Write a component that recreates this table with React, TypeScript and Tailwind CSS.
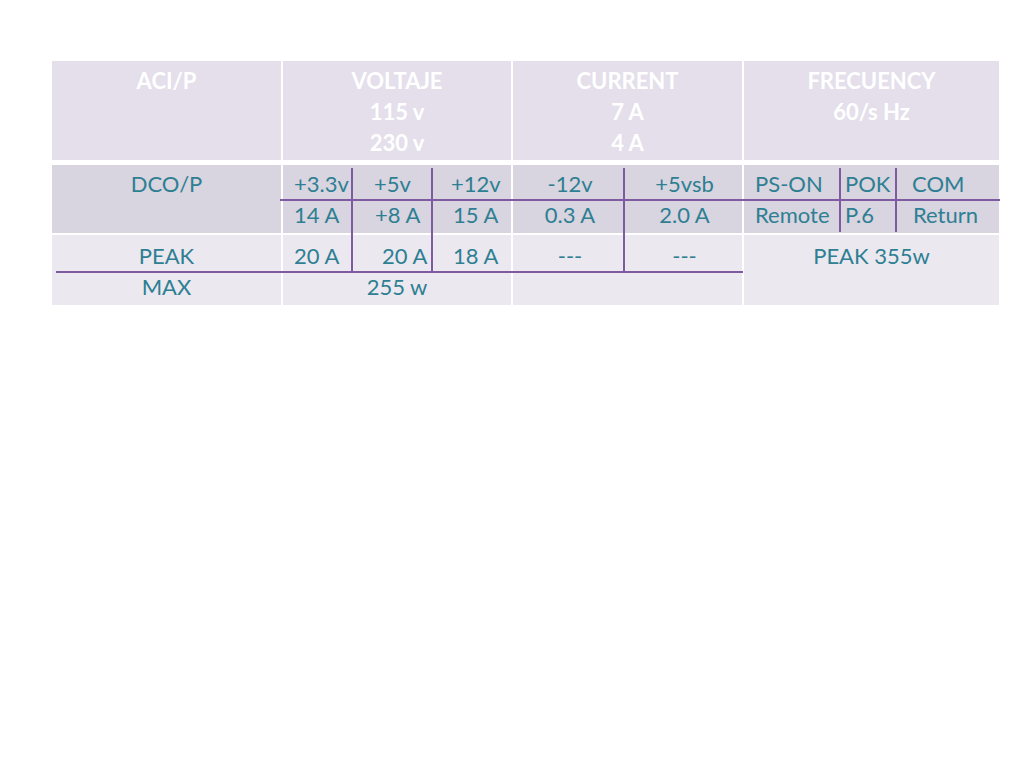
import React from "react";

const font = { fontFamily: "Lato, 'Open Sans', sans-serif" };

const Line = ({ className }: { className: string }) => (
  <div className={`absolute bg-[#7e5aa2] ${className}`} />
);

export default function App() {
  return (
    <div className="w-[1024px] h-[768px] bg-white pt-[61px] pl-[52px]" style={font}>
      <div className="relative w-[947px] text-[22px] leading-[31px]">
        {/* header row */}
        <div className="grid grid-cols-[229px_228px_229px_255px] gap-x-[2px] h-[99px] bg-white">
          <div className="bg-[#e4dfeb] pt-[4px] text-center font-bold text-white">ACI/P</div>
          <div className="bg-[#e4dfeb] pt-[4px] text-center font-bold text-white">
            <div>VOLTAJE</div>
            <div>115 v</div>
            <div>230 v</div>
          </div>
          <div className="bg-[#e4dfeb] pt-[4px] text-center font-bold text-white">
            <div>CURRENT</div>
            <div>7 A</div>
            <div>4 A</div>
          </div>
          <div className="bg-[#e4dfeb] pt-[4px] text-center font-bold text-white">
            <div>FRECUENCY</div>
            <div>60/s Hz</div>
          </div>
        </div>

        {/* DC row */}
        <div className="mt-[5px] grid grid-cols-[229px_228px_229px_255px] gap-x-[2px] h-[68px] text-[#2e7f92]">
          <div className="bg-[#d8d4e0] pt-[3px] text-center">DCO/P</div>
          <div className="bg-[#d8d4e0] pt-[3px] pl-[11px]">
            <div className="flex">
              <span className="w-[80px]">+3.3v</span>
              <span className="w-[77px]">+5v</span>
              <span>+12v</span>
            </div>
            <div className="flex">
              <span className="w-[81px]">14 A</span>
              <span className="w-[78px]">+8 A</span>
              <span>15 A</span>
            </div>
          </div>
          <div className="bg-[#d8d4e0] pt-[3px]">
            <div className="flex">
              <span className="w-[114px] text-center">-12v</span>
              <span className="flex-1 text-center">+5vsb</span>
            </div>
            <div className="flex">
              <span className="w-[114px] text-center">0.3 A</span>
              <span className="flex-1 text-center">2.0 A</span>
            </div>
          </div>
          <div className="bg-[#d8d4e0] pt-[3px] pl-[11px]">
            <div className="flex">
              <span className="w-[90px]">PS-ON</span>
              <span className="w-[67px]">POK</span>
              <span>COM</span>
            </div>
            <div className="flex">
              <span className="w-[90px]">Remote</span>
              <span className="w-[68px]">P.6</span>
              <span>Return</span>
            </div>
          </div>
        </div>

        {/* peak / max row */}
        <div className="mt-[2px] grid grid-cols-[229px_228px_229px_255px] gap-x-[2px] h-[70px] text-[#2e7f92]">
          <div className="bg-[#ebe8f0] pt-[5px] text-center">
            <div>PEAK</div>
            <div>MAX</div>
          </div>
          <div className="bg-[#ebe8f0] pt-[5px]">
            <div className="flex pl-[11px]">
              <span className="w-[88px]">20 A</span>
              <span className="w-[71px]">20 A</span>
              <span>18 A</span>
            </div>
            <div className="text-center">255 w</div>
          </div>
          <div className="bg-[#ebe8f0] pt-[5px]">
            <div className="flex">
              <span className="w-[114px] text-center">---</span>
              <span className="flex-1 text-center">---</span>
            </div>
          </div>
          <div className="bg-[#ebe8f0] pt-[5px] text-center">PEAK 355w</div>
        </div>

        {/* hand-drawn purple divider lines over the table */}
        <Line className="left-[228px] top-[138px] w-[720px] h-[2px]" />
        <Line className="left-[4px] top-[210px] w-[687px] h-[2px]" />
        <Line className="left-[299px] top-[107px] w-[2px] h-[104px]" />
        <Line className="left-[379px] top-[107px] w-[2px] h-[104px]" />
        <Line className="left-[571px] top-[107px] w-[2px] h-[104px]" />
        <Line className="left-[787px] top-[107px] w-[2px] h-[64px]" />
        <Line className="left-[843px] top-[107px] w-[2px] h-[64px]" />
      </div>
    </div>
  );
}
